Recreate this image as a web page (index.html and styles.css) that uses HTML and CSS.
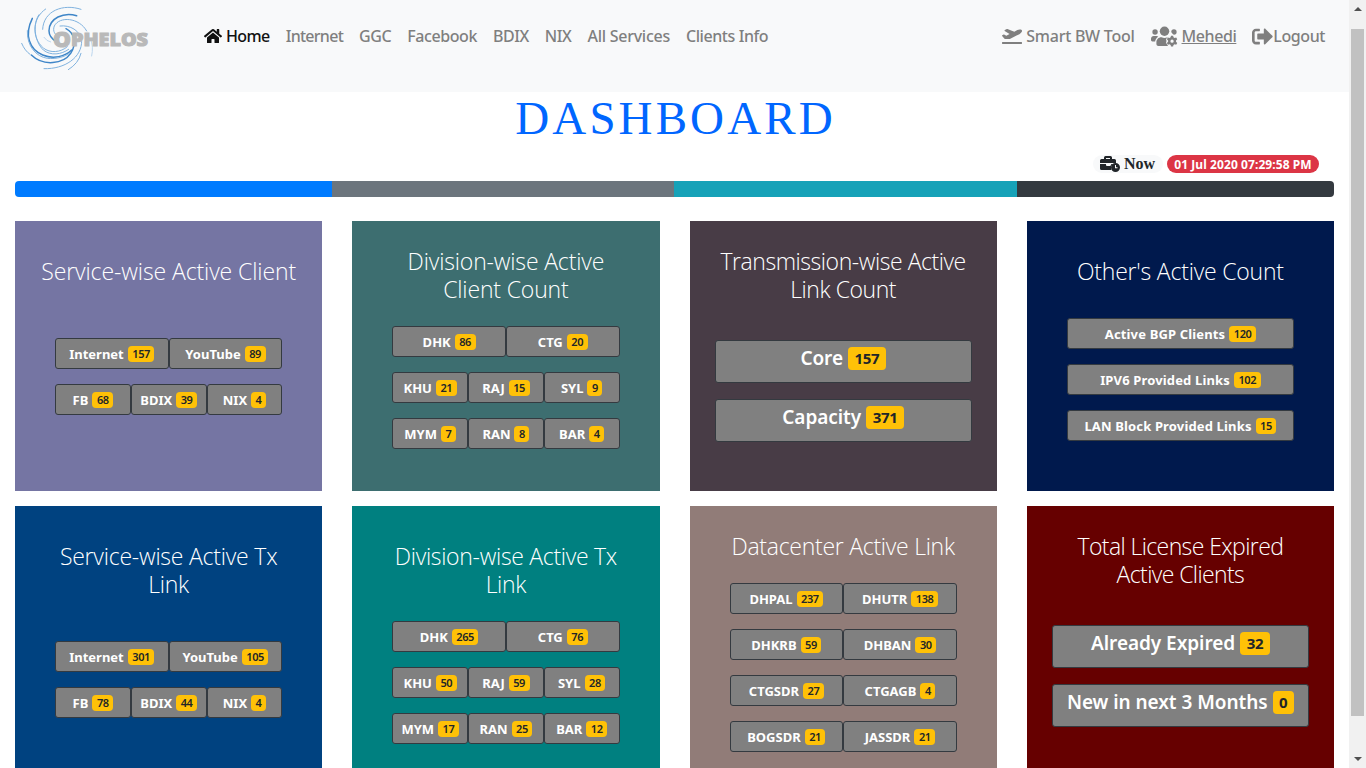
FILE: index.html
```html
<!DOCTYPE html>
<html lang="en">
<head>
<meta charset="utf-8">
<title>Dashboard</title>
<link rel="stylesheet" href="styles.css">
</head>
<body>
<div class="page">
  <header class="navbar">
    <a class="brand">
      <svg width="130" height="68" viewBox="20 4 130 68">
        <g class="swirl" transform="scale(.3333)">
          <path d="M243 28C190 10 130 32 128 88"/>
          <path d="M230 47C190 35 148 55 147 92C147 106 155 116 168 124" class="bold"/>
          <path d="M260 93C238 52 178 48 163 78C157 94 165 105 178 112"/>
          <path d="M137 27C96 55 94 112 130 144C150 160 182 158 202 140"/>
          <path d="M117 44C99 68 101 122 130 150C152 168 184 164 206 148"/>
          <path d="M97 55C72 105 88 148 128 165C160 178 195 170 215 150" class="bold"/>
          <path d="M82 92C80 138 108 170 142 175C170 178 195 170 208 160"/>
          <path d="M65 130C72 146 80 156 90 163"/>
          <path d="M94 165C130 200 190 192 212 160C232 130 222 98 198 86" class="bold"/>
          <path d="M132 206C195 208 246 172 245 122C241 92 210 74 180 78"/>
          <path d="M205 209Q236 190 243 160"/>
          <path d="M275 168Q281 140 272 118" class="faint"/>
          <path d="M132 112Q140 124 152 126" class="faint"/>
        </g>
        <text class="logo-text logo-cap" x="53" y="46.500" textLength="18" lengthAdjust="spacingAndGlyphs">O</text>
        <text class="logo-text" x="71" y="46" textLength="77" lengthAdjust="spacingAndGlyphs">PHELOS</text>
      </svg>
    </a>
    <nav class="links">
      <a class="active"><svg class="home" width="18" height="16" viewBox="0 0 576 512"><path d="M280.37 148.26L96 300.11V464a16 16 0 0 0 16 16l112.06-.29a16 16 0 0 0 15.92-16V368a16 16 0 0 1 16-16h64a16 16 0 0 1 16 16v95.64a16 16 0 0 0 16 16.05L464 480a16 16 0 0 0 16-16V300L295.67 148.26a12.19 12.19 0 0 0-15.3 0zM571.6 251.47L488 182.56V44.05a12 12 0 0 0-12-12h-56a12 12 0 0 0-12 12v72.61L318.47 43a48 48 0 0 0-61 0L4.34 251.47a12 12 0 0 0-1.6 16.9l25.5 31A12 12 0 0 0 45.15 301l235.22-193.74a12.19 12.19 0 0 1 15.3 0L530.9 301a12 12 0 0 0 16.9-1.6l25.5-31a12 12 0 0 0-1.7-16.93z"/></svg>Home</a>
      <a class="tight">Internet</a><a>GGC</a><a>Facebook</a><a>BDIX</a><a>NIX</a><a class="wide">All Services</a><a>Clients Info</a>
    </nav>
    <nav class="links account">
      <a class="wide"><svg class="plane" width="20" height="16" viewBox="0 0 640 512"><path d="M624 448H16c-8.84 0-16 7.16-16 16v32c0 8.84 7.16 16 16 16h608c8.84 0 16-7.16 16-16v-32c0-8.84-7.16-16-16-16zM80.55 341.27c6.28 6.84 15.1 10.72 24.33 10.71l130.54-.18a65.62 65.62 0 0 0 29.64-7.12l290.96-147.65c26.74-13.57 50.71-32.94 67.02-58.31 18.31-28.48 20.3-49.09 13.07-63.65-7.21-14.57-24.74-25.27-58.25-27.45-29.85-1.94-59.54 5.92-86.28 19.48l-98.51 49.99-218.7-82.06a17.799 17.799 0 0 0-18-1.11L90.62 67.29c-10.67 5.41-13.25 19.65-5.17 28.53l156.22 98.1-103.21 52.38-72.35-36.47a17.804 17.804 0 0 0-16.07.02L9.91 230.22c-10.44 5.3-13.19 19.12-5.57 28.08l76.21 82.97z"/></svg>Smart BW Tool</a>
      <a><svg class="users" width="27" height="22" viewBox="0 0 640 512"><circle cx="96" cy="160" r="64"/><circle cx="320" cy="144" r="112"/><path d="M544 224a64 64 0 1 0-64-64c12 18 36 56 64 64zM0 320c0-36 28-64 64-64h64c18 0 34 7 45 19-40 22-68 61-75 109H32c-18 0-32-14-32-32zM128 403c0-64 51-115 115-115h8c44 21 94 21 138 0h8l-30 26-12 34 18 26-18 26 12 34 38 60H176c-27 0-48-21-48-48z"/><path fill-rule="evenodd" d="M474 250h50l9 38 27 16 37-12 25 43-29 27v31l29 27-25 43-37-12-27 16-9 38h-50l-9-38-27-16-37 12-25-43 29-27v-31l-29-27 25-43 37 12 27-16zM499 339a39 39 0 1 0 0 78a39 39 0 0 0 0-78z"/></svg><span class="under">Mehedi</span></a>
      <a><svg class="out" width="21" height="21" viewBox="0 0 512 512"><path d="M497 273L329 441c-15 15-41 4.500-41-17v-96H152c-13.300 0-24-10.700-24-24v-96c0-13.300 10.700-24 24-24h136V88c0-21.400 25.900-32 41-17l168 168c9.300 9.400 9.300 24.600 0 34zM192 436v-40c0-6.600-5.400-12-12-12H96c-17.700 0-32-14.300-32-32V160c0-17.700 14.300-32 32-32h84c6.600 0 12-5.400 12-12V76c0-6.600-5.400-12-12-12H96c-53 0-96 43-96 96v192c0 53 43 96 96 96h84c6.600 0 12-5.400 12-12z"/></svg>Logout</a>
    </nav>
  </header>
  <main>
    <h1>DASHBOARD</h1>
    <div class="clock">
      <span class="now"><svg width="20" height="16" viewBox="0 0 640 512"><path fill-rule="evenodd" d="M48 96h80V48q0-48 48-48h160q48 0 48 48v48h80q48 0 48 48v80H0v-80q0-48 48-48zM192 64v32h128V64zM0 256h192v32q0 32 32 32h96q18 0 25-22l20-42h60C380 284 350 330 352 384q0 36 16 64H48q-48 0-48-48z"/><path fill-rule="evenodd" d="M496 224a144 144 0 1 0 0 288a144 144 0 0 0 0-288zM480 288h32v72h48v32h-80z"/></svg>Now</span>
      <span class="time">01 Jul 2020 07:29:58 PM</span>
    </div>
    <div class="progress"><i class="blue"></i><i class="gray"></i><i class="teal"></i><i class="dark"></i></div>
    <section class="cards">
      <article class="card c1"><h2>Service-wise Active Client</h2>
        <div class="row"><button>Internet <b>157</b></button><button>YouTube <b>89</b></button></div>
        <div class="row"><button>FB <b>68</b></button><button>BDIX <b>39</b></button><button>NIX <b>4</b></button></div></article>
      <article class="card c2"><h2>Division-wise Active<br>Client Count</h2>
        <div class="row"><button>DHK <b>86</b></button><button>CTG <b>20</b></button></div>
        <div class="row"><button>KHU <b>21</b></button><button>RAJ <b>15</b></button><button>SYL <b>9</b></button></div>
        <div class="row"><button>MYM <b>7</b></button><button>RAN <b>8</b></button><button>BAR <b>4</b></button></div></article>
      <article class="card c3 large"><h2>Transmission-wise Active<br>Link Count</h2>
        <div class="row"><button>Core <b>157</b></button></div>
        <div class="row"><button>Capacity <b>371</b></button></div></article>
      <article class="card c4"><h2>Other's Active Count</h2>
        <div class="row"><button>Active BGP Clients <b>120</b></button></div>
        <div class="row"><button>IPV6 Provided Links <b>102</b></button></div>
        <div class="row"><button>LAN Block Provided Links <b>15</b></button></div></article>
      <article class="card c5"><h2>Service-wise Active Tx<br>Link</h2>
        <div class="row"><button>Internet <b>301</b></button><button>YouTube <b>105</b></button></div>
        <div class="row"><button>FB <b>78</b></button><button>BDIX <b>44</b></button><button>NIX <b>4</b></button></div></article>
      <article class="card c6"><h2>Division-wise Active Tx<br>Link</h2>
        <div class="row"><button>DHK <b>265</b></button><button>CTG <b>76</b></button></div>
        <div class="row"><button>KHU <b>50</b></button><button>RAJ <b>59</b></button><button>SYL <b>28</b></button></div>
        <div class="row"><button>MYM <b>17</b></button><button>RAN <b>25</b></button><button>BAR <b>12</b></button></div></article>
      <article class="card c7"><h2>Datacenter Active Link</h2>
        <div class="row"><button>DHPAL <b>237</b></button><button>DHUTR <b>138</b></button></div>
        <div class="row"><button>DHKRB <b>59</b></button><button>DHBAN <b>30</b></button></div>
        <div class="row"><button>CTGSDR <b>27</b></button><button>CTGAGB <b>4</b></button></div>
        <div class="row"><button>BOGSDR <b>21</b></button><button>JASSDR <b>21</b></button></div></article>
      <article class="card c8 large"><h2>Total License Expired<br>Active Clients</h2>
        <div class="row"><button>Already Expired <b>32</b></button></div>
        <div class="row"><button>New in next 3 Months <b>0</b></button></div></article>
    </section>
  </main>
</div>
<div class="scrollbar"><span class="arrow up"></span><span class="thumb"></span><span class="arrow down"></span></div>
</body>
</html>
```
FILE: styles.css
```css
* { box-sizing: border-box; }
body { margin: 0; height: 768px; overflow: hidden; display: flex; background: #fff; font-family: "Noto Sans", "Open Sans", sans-serif; color: #212529; }
.page { width: 1349px; height: 768px; overflow: hidden; }
.navbar { height: 92px; background: #f8f9fa; display: flex; align-items: flex-start; padding: 4px 24px 0 20px; }
.brand { width: 184px; height: 68px; flex: none; }
.brand svg { display: block; }
.swirl { fill: none; stroke: #7fb2de; stroke-width: 3; stroke-linecap: round; }
.swirl .bold { stroke: #3f86c8; stroke-width: 4.5; }
.swirl .faint { stroke: #bcd6ee; }
.logo-text { font: 800 17px "Open Sans", sans-serif; fill: #b9b9b9; stroke: #b9b9b9; stroke-width: 1; }
.logo-cap { font-size: 21px; }
.links { display: flex; gap: 16px; padding-top: 20px; }
.links a { display: flex; align-items: center; height: 24px; font-size: 16px; font-weight: 500; letter-spacing: -.42px; line-height: 24px; color: #7f7f7f; white-space: nowrap; }
.links .tight { letter-spacing: -.72px; }
.links .wide { letter-spacing: -.26px; }
.links .active { color: #111; letter-spacing: -.6px; }
.links svg { fill: currentColor; flex: none; }
.links .home { margin-right: 4px; }
.account { margin-left: auto; }
.plane { margin-right: 4px; }
.users { margin-right: 4px; }
.under { text-decoration: underline; }
main { padding: 0 15px; }
h1 { margin: 0; height: 60px; padding-left: 2px; font: 400 47px/52px "Liberation Serif", serif; letter-spacing: 3.1px; text-align: center; color: #06f; }
.clock { display: flex; justify-content: flex-end; gap: 4px; padding: 3px 15px 8px 0; height: 29px; }
.now, .time { height: 18px; border-radius: 9px; display: flex; align-items: center; white-space: nowrap; }
.now { width: 70px; padding-left: 7px; gap: 4px; background: #f8f9fa; font: bold 16px/18px "Liberation Serif", serif; }
.now svg { fill: #212529; }
.time { width: 152px; justify-content: center; background: #dc3545; color: #fff; font-weight: 700; font-size: 12px; letter-spacing: .08px; }
.progress { height: 16px; display: flex; border-radius: 4px; overflow: hidden; }
.blue { width: 24%; background: #007bff; }
.gray { width: 26%; background: #6c757d; }
.teal { width: 26%; background: #17a2b8; }
.dark { width: 24%; background: #343a40; }
.cards { display: grid; grid-template-columns: repeat(4, 1fr); column-gap: 30px; row-gap: 15px; padding-top: 24px; }
.card { height: 270px; padding: 36px 40px 0; display: flex; flex-direction: column; }
h2 { margin: 0 -30px; font: 300 23px/28px "Open Sans", sans-serif; letter-spacing: -.1px; color: #fff; text-align: center; white-space: nowrap; }
.row { display: flex; margin-bottom: 15px; }
button { flex: 1 1 0; height: 31px; padding: 0; display: flex; align-items: center; justify-content: center; gap: 4px; border: 1px solid #343a40; border-radius: 3px; background: #808080; color: #fff; font: 700 13px/18px "Noto Sans", sans-serif; white-space: nowrap; }
b { height: 16px; padding: 0 4.500px; border-radius: 4px; background: #ffc107; color: #212529; font-size: 11px; line-height: 16px; font-weight: 600; letter-spacing: -.4px; }
.c1 { background: #7575a3; } .c1 h2 { margin-bottom: 53px; }
.c2 { background: #3d6e70; padding-top: 26px; } .c2 h2 { margin-bottom: 23px; letter-spacing: -.15px; }
.c3 { background: #483c46; } .c3 h2 { margin-bottom: 37px; letter-spacing: -.45px; }
.c4 { background: #00194d; } .c4 h2 { margin-bottom: 33px; letter-spacing: -.2px; } .c4 button { letter-spacing: .15px; }
.c4 b { letter-spacing: -.4px; }
.c5 { background: #004280; } .c5 h2 { margin-bottom: 43px; letter-spacing: -.22px; }
.c6 { background: #008080; } .c6 h2 { margin-bottom: 23px; letter-spacing: -.3px; }
.c7 { background: #917c78; padding-top: 26px; } .c7 h2 { margin-bottom: 23px; letter-spacing: -.27px; }
.c8 { background: #600; } .c8 h2 { margin-bottom: 37px; letter-spacing: -.6px; }
.large { padding: 26px 25px 0; }
.large h2 { margin-left: 0; margin-right: 0; }
.large .row { margin-bottom: 16px; }
.large button { height: 43px; padding-bottom: 7px; font-size: 19px; font-weight: 600; gap: 5px; letter-spacing: -.05px; }
.large b { height: 23px; padding: 0 6.500px; font-size: 15px; line-height: 23px; font-weight: 700; letter-spacing: -.3px; }
.scrollbar { width: 17px; height: 768px; background: #f1f1f1; display: flex; flex-direction: column; align-items: center; padding: 7px 0; }
.arrow { width: 0; height: 0; border: 4px solid transparent; }
.up { border-top: 0; border-bottom-color: #505050; }
.down { border-bottom: 0; border-top-color: #505050; margin-top: auto; }
.thumb { width: 13px; height: 687px; margin-top: 18px; background: #c1c1c1; }
```
